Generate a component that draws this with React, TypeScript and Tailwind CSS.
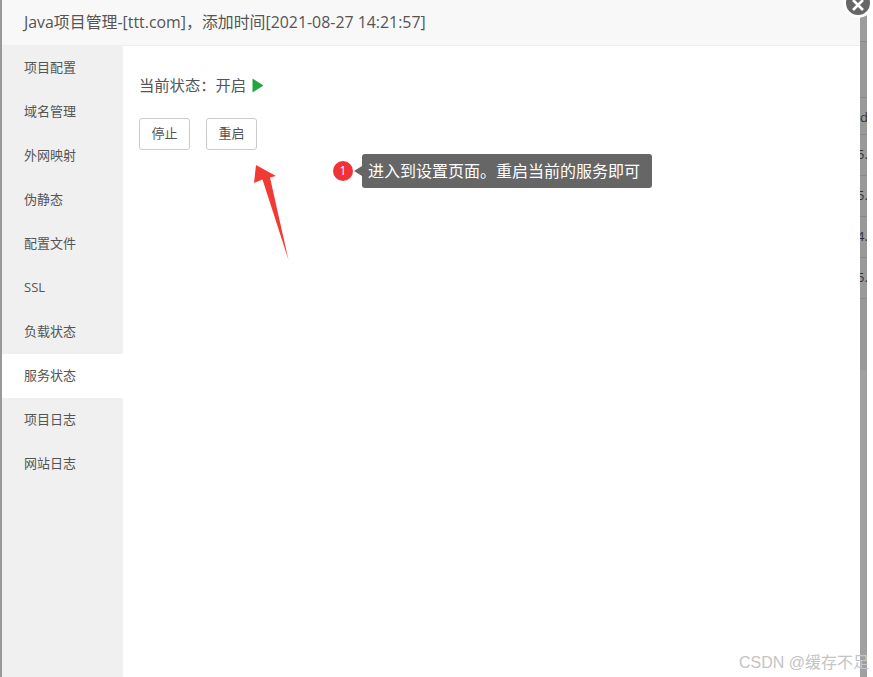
import React from "react";

const latinCjk = "font-['Open_Sans','Noto_Sans_CJK_SC',sans-serif]";

const menu = [
    "项目配置",
    "域名管理",
    "外网映射",
    "伪静态",
    "配置文件",
    "SSL",
    "负载状态",
    "服务状态",
    "项目日志",
    "网站日志",
];

function BackdropStrip() {
    const cells = ["5.", "5.", "4.", "5."];
    return (
        <div className="w-[7px] h-full bg-[#999999] overflow-hidden flex flex-col text-[#333333] text-[13px]">
            <div className="h-[41px] shrink-0 bg-[#9c9c9c]" />
            <div className="h-[56px] shrink-0 border-t border-[#8a8a8a]" />
            <div className="h-[37px] shrink-0 border-t border-[#8a8a8a] leading-[38px]">d</div>
            {cells.map((c, i) => (
                <div key={i} className="h-[41px] shrink-0 border-t border-[#8a8a8a] leading-[38px] -indent-[3px] whitespace-nowrap">
                    {c}
                </div>
            ))}
            <div className="h-[72px] shrink-0 border-t border-[#8a8a8a]" />
            <div className="flex-1 bg-[#a0a0a0]" />
        </div>
    );
}

function Dialog() {
    return (
        <div className="w-[858px] h-full bg-white flex flex-col">
            <div className="h-[46px] shrink-0 bg-[#f8f8f8] border-b border-[#eeeeee] pl-[22px] text-[15.9px] leading-[44px] text-[#555555] whitespace-nowrap">
                Java项目管理-[ttt.com]，添加时间[2021-08-27 14:21:57]
            </div>
            <div className="flex-1 flex">
                <div className="w-[121px] bg-[#f0f0f0] flex flex-col">
                    {menu.map((m) => (
                        <div
                            key={m}
                            className={
                                "h-[44px] pl-[22px] text-[13px] leading-[42px] text-[#555555] " +
                                (m === "服务状态" ? "bg-white" : "")
                            }
                        >
                            {m}
                        </div>
                    ))}
                </div>
                <div className="flex-1 pl-4 pt-[28px]">
                    <div className="flex items-center h-[22px] text-[15.3px] text-[#555555]">
                        当前状态：开启
                        <svg className="ml-[6px]" width="12" height="15" viewBox="0 0 12 15">
                            <path d="M0.5 0.5 L11.5 7.5 L0.5 14.5 Z" fill="#22a53d" />
                        </svg>
                    </div>
                    <div className="flex gap-4 mt-[22px]">
                        <button className="w-[51px] h-8 border border-[#cccccc] rounded-[3px] bg-white text-[13px] text-[#555555]">
                            停止
                        </button>
                        <button className="w-[51px] h-8 border border-[#cccccc] rounded-[3px] bg-white text-[13px] text-[#555555]">
                            重启
                        </button>
                    </div>
                </div>
            </div>
        </div>
    );
}

export default function App() {
    return (
        <div className={"relative w-[873px] h-[677px] overflow-hidden bg-white flex " + latinCjk}>
            <div className="w-[2px] h-full bg-[#999999]" />
            <Dialog />
            <BackdropStrip />

            {/* close button of the dialog */}
            <div className="absolute left-[843px] top-[-12px] w-[30px] h-[30px] rounded-full bg-[#666666] border-[3px] border-white flex items-center justify-center">
                <svg className="mt-[4px]" width="14" height="14" viewBox="0 0 14 14">
                    <path d="M2 2 L12 12 M12 2 L2 12" stroke="#ffffff" strokeWidth="2.6" fill="none" />
                </svg>
            </div>

            {/* annotation */}
            <div className="absolute left-[333px] top-[154px] flex items-center">
                <div className="w-5 h-5 rounded-full bg-[#f03336] text-white text-[12px] flex items-center justify-center">
                    1
                </div>
                <div className="w-0 h-0 ml-[1px] border-y-[5px] border-y-transparent border-r-[8px] border-r-[#666666]" />
                <div className="w-[290px] h-[34px] pl-[6px] rounded-[3px] bg-[#666666] text-white text-[16px] leading-[34px] whitespace-nowrap">
                    进入到设置页面。重启当前的服务即可
                </div>
            </div>

            <svg className="absolute left-[250px] top-[160px]" width="44" height="104" viewBox="0 0 44 104">
                <path d="M6 5 L4 23 L12.5 19.5 L38.5 100 L20 17.5 L26 16 Z" fill="#f23a35" />
            </svg>

            <div className="absolute left-[739px] top-[654px] font-['Liberation_Sans','Noto_Sans_CJK_SC',sans-serif] text-[16px] leading-[18px] text-[#c4c4c4] whitespace-nowrap">
                CSDN @缓存不足
            </div>
        </div>
    );
}
